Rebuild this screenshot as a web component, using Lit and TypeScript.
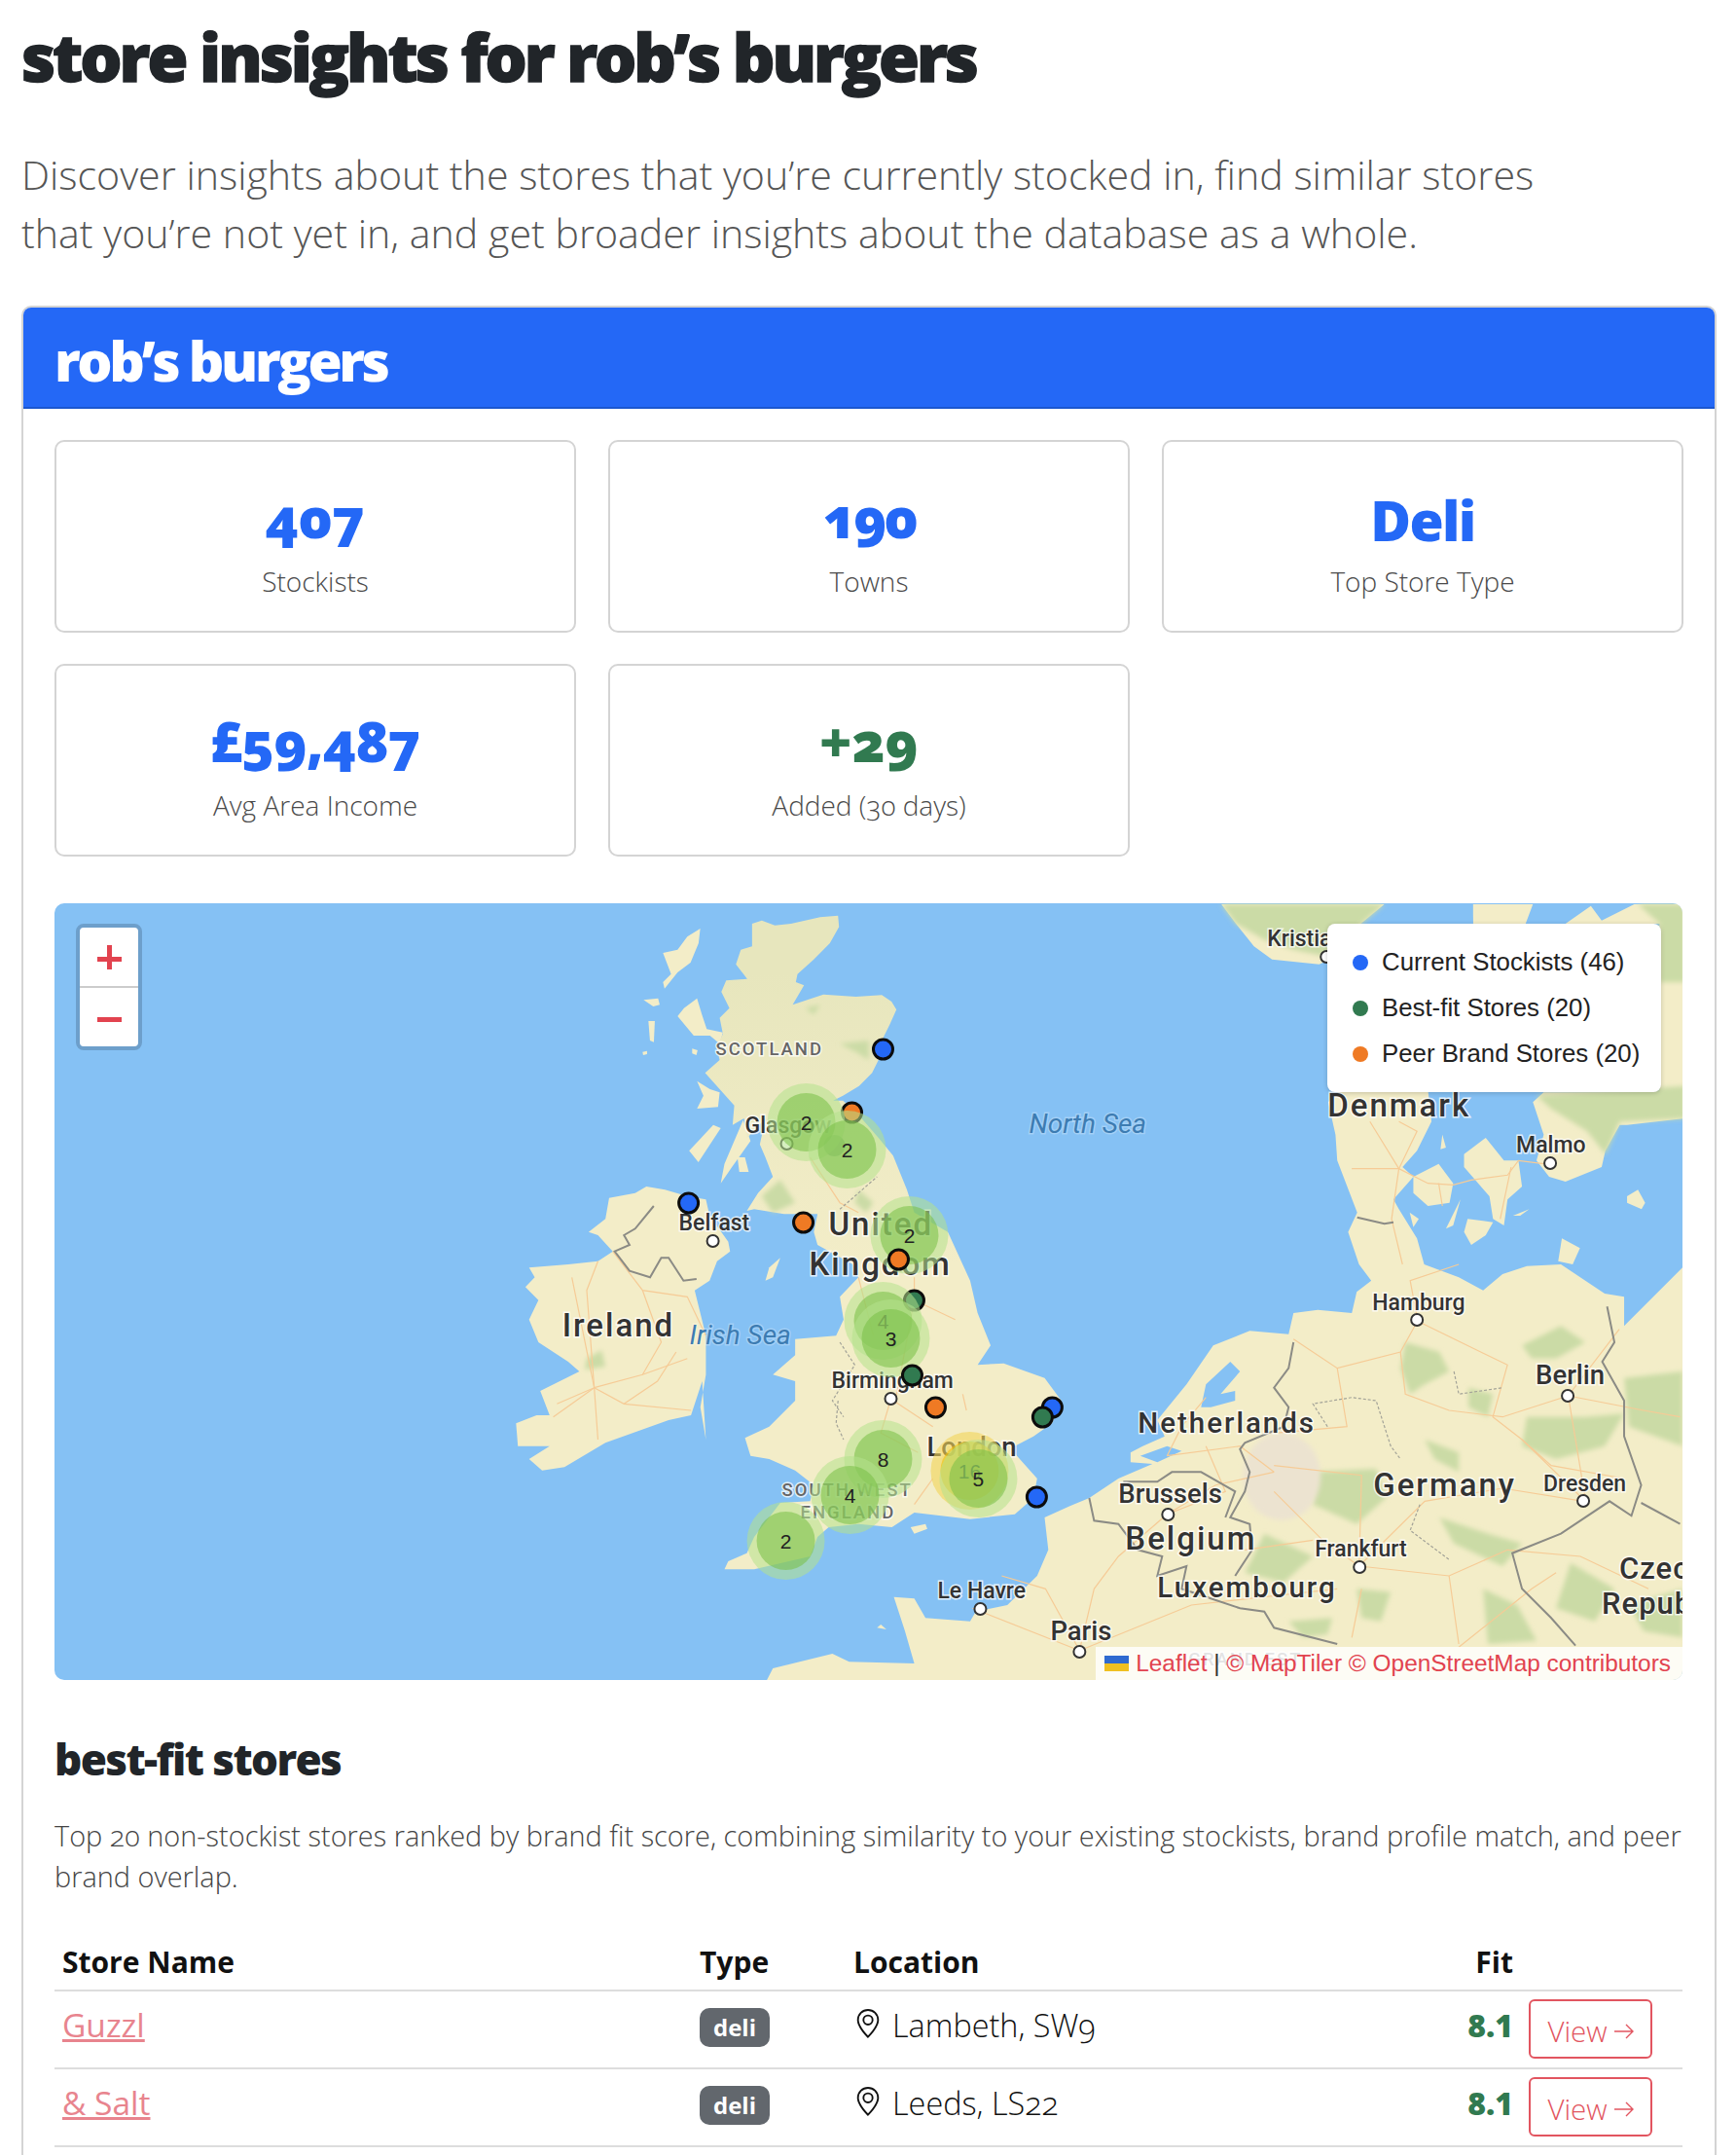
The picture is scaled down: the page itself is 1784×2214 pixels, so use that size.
import { LitElement, html, css, svg } from "lit";
import { customElement } from "lit/decorators.js";

type Zoom = [number, number, number];
const Z4: Zoom = [1200, 900, 2.685];
const Z5: Zoom = [500, 1080, 2.613];
const Z6: Zoom = [500, 1380, 2.613];
const Z7: Zoom = [1000, 1300, 2];
const Z10: Zoom = [640, 930, 3];

const conv = (z: Zoom, s: string) =>
  s.trim().split(/\s+/).map((p) => {
    const [x, y] = p.split(",").map(Number);
    return `${(z[0] + x / z[2]).toFixed(1)},${(z[1] + y / 3).toFixed(1)}`;
  }).join(" ");

const gb = [
  conv(Z10, "400,60 430,50 470,65 520,60 610,40 665,35 668,70 640,120 590,170 540,215 535,240 560,250 525,310 570,295 620,278 720,285 800,280 830,300 845,325 825,370 800,420 790,480 770,520 730,560 680,590 650,605 680,605 720,640 790,720 835,775"),
  conv(Z5, "1130,430 1150,500 1240,560 1300,710 1320,810 1355,910 1320,970 1390,965"),
  conv(Z6, "1500,110 1545,180 1520,250 1470,290 1420,320 1410,330 1480,420 1470,480 1420,530 1300,545 1150,525 1090,570 1000,560 920,570 890,600 870,660 720,700 640,700 650,675 700,650 720,600 790,495 870,490 880,440 830,395 760,360 710,350 695,295 760,260 830,180 830,120 770,100 830,40"),
  conv(Z5, "830,890 940,880 960,830 950,760 1000,700 985,660 890,600 880,560 890,505 800,505 720,490 700,495 730,440 770,390 750,330 735,290 750,210"),
  conv(Z10, "385,720 375,660 340,680 345,620 300,570 255,520 300,480 290,440 310,400 300,350 330,320 305,270 320,235 385,230 350,185 365,140 400,130"),
].join(" ");

const ireland = [
  conv(Z5, "330,455 400,440 430,420 480,430 540,450 590,460 600,510 650,590 655,620 620,650 600,710 560,740 590,880 590,1000 575,1100 590,1200"),
  conv(Z6, "580,120 550,225 490,240 320,310 210,385 150,395 115,360 170,320 85,320 80,250 135,225 170,225 145,150 250,90"),
  conv(Z5, "220,960 140,900 115,830 140,770 105,730 130,700 115,670 220,660 300,650 340,620 300,570 275,560 320,520"),
].join(" ");

const continent = [
  conv(Z6, "750,1050 770,1005 930,960 975,985 1150,990 1125,890 1095,785 1150,790 1180,850 1300,860 1315,830 1400,810 1480,720 1510,640 1500,540 1568,505"),
  conv(Z7, "240,720 300,660 370,615 325,610 325,580 350,560 395,530 380,480 440,370 495,250 570,205 650,215 660,150 710,140 780,150 790,85 820,50"),
  conv(Z4, "530,1200 500,1100 525,1040 470,880 465,800 445,700 480,660 720,660 730,760 690,850 650,900 680,930 625,1000 640,1030 690,1120 710,1200"),
  conv(Z7, "1000,40 1050,80 1090,30 1140,5 1210,0 1300,90 1340,100 1340,190 1460,10 1480,0"),
  "1760,1760 787,1760",
].join(" ");

const landSmall: string[] = [
  conv(Z10, "240,75 235,120 210,180 170,210 130,260 125,240 150,215 125,150 170,140 200,100"),
  conv(Z10, "230,290 245,340 260,385 310,395 300,430 270,405 220,405 170,345 190,320"),
  conv(Z10, "65,295 110,290 115,310 95,315"),
  conv(Z10, "80,360 100,360 97,425 85,420"),
  conv(Z10, "230,545 270,570 300,580 295,625 230,630 250,590"),
  conv(Z10, "215,445 232,450 228,465 215,460"),
  conv(Z10, "62,455 76,452 76,462 64,465"),
  conv(Z5, "790,640 770,700 750,710 760,670"),
  conv(Z5, "630,410 640,350 690,215 710,280 660,360"),
  conv(Z5, "675,330 695,330 705,375 680,375"),
  conv(Z5, "545,310 610,230 630,240 570,345"),
  conv(Z6, "1140,570 1180,560 1185,575 1150,590"),
  conv(Z6, "1050,880 1075,885 1060,870"),
  conv(Z4, "150,90 190,150 240,220 290,260 420,275 450,260 480,200 600,90"),
  conv(Z4, "1010,700 1040,670 1360,670 1360,150 845,150 845,90 1010,90 990,150 1100,150 1170,95 1200,140 1290,90 1430,90 1430,750 1270,770 1250,770 1210,850 1200,900 1100,945 1055,930 1020,880 1040,800"),
  conv(Z4, "680,930 750,890 790,950 780,1010 720,1020 680,980"),
  conv(Z4, "820,860 880,810 930,880 970,880 980,960 940,1000 930,1080 900,1060 890,990 820,900"),
  conv(Z4, "1270,990 1300,970 1320,1010 1310,1030 1270,1010"),
  conv(Z4, "830,1060 900,1070 880,1110 840,1140 820,1100"),
  conv(Z4, "770,1090 810,1000 790,1080"),
  conv(Z4, "670,1040 695,1060 680,1085"),
  conv(Z4, "1090,1120 1140,1150 1120,1200 1080,1190"),
  conv(Z4, "760,800 770,840 755,845"),
  conv(Z4, "955,1050 1000,1030 975,1050"),
];

const seaCuts: string[] = [
  conv(Z7, "470,440 480,370 530,300 550,330 510,400 540,390 540,420 490,440"),
  conv(Z7, "345,590 400,560 430,575 380,610"),
  conv(Z4, "600,90 840,90 845,150 600,150"),
];

const forests: string[] = [
  conv(Z7, "890,240 960,270 980,330 930,370 900,400 880,320"),
  conv(Z7, "1020,380 1070,400 1060,470 1020,440"),
  conv(Z7, "1130,250 1210,190 1260,240 1200,290 1150,290"),
  conv(Z7, "1140,470 1260,470 1340,460 1300,560 1200,600 1130,560"),
  conv(Z7, "1340,350 1460,330 1460,560 1350,500"),
  conv(Z7, "930,540 1000,580 1000,640 950,600"),
  conv(Z7, "700,640 830,630 850,720 790,800 700,740"),
  conv(Z7, "960,780 1060,830 1130,860 1090,930 990,860"),
  conv(Z7, "1230,920 1320,1000 1280,1100 1200,1060"),
  conv(Z7, "600,830 700,900 640,980 560,950"),
  conv(Z7, "790,1000 860,1010 840,1100 800,1090"),
  conv(Z7, "1050,1000 1120,1050 1160,1160 1060,1170"),
  conv(Z7, "1350,1050 1460,1000 1460,1150 1380,1130"),
  conv(Z7, "650,1100 740,1090 730,1140 680,1150"),
  conv(Z4, "150,90 600,90 430,250 350,230 270,200 190,150"),
  conv(Z4, "1020,680 1430,650 1430,750 1250,760 1210,860 1160,790 1060,720"),
  conv(Z4, "1300,90 1430,90 1430,330 1360,330 1360,150"),
  conv(Z5, "740,450 790,400 830,470 770,500"),
  conv(Z5, "1000,430 1040,470 1020,500 990,470"),
  conv(Z10, "670,430 760,420 760,480 720,455"),
  conv(Z10, "565,320 610,310 590,340"),
  conv(Z5, "270,950 310,925 320,975 265,985"),
];

const roads: string[] = [
  conv(Z7, "660,230 750,320 880,270 915,175"),
  conv(Z7, "915,175 1100,310 1070,470 1130,540 1260,730"),
  conv(Z7, "880,270 890,400 980,450 1090,470 1225,405"),
  conv(Z7, "750,320 770,500 620,520"),
  conv(Z7, "620,620 800,650 795,930"),
  conv(Z7, "795,930 720,850 620,700"),
  conv(Z7, "795,930 930,730 1090,690 1256,730"),
  conv(Z7, "795,930 980,960 1100,880 1250,900 1390,1000"),
  conv(Z7, "800,1000 780,1150"),
  conv(Z7, "980,960 1000,1170"),
  conv(Z7, "1225,405 1380,450 1455,470"),
  conv(Z7, "1225,405 1330,200"),
  conv(Z7, "1225,405 1260,720"),
  conv(Z7, "400,770 500,680 620,640"),
  conv(Z7, "400,770 300,900 250,1000 220,1190"),
  conv(Z7, "220,1190 150,1000 60,960"),
  conv(Z7, "220,1190 0,1060"),
  conv(Z7, "220,1190 450,1050 750,1000"),
  conv(Z7, "400,590 550,560 620,640"),
  conv(Z7, "400,590 430,500 480,410"),
  conv(Z7, "1000,0 900,50 915,170"),
  conv(Z7, "1000,1180 1150,1000 1200,950"),
  conv(Z7, "1340,660 1190,620 1130,540"),
  conv(Z7, "480,560 520,700 400,770"),
  conv(Z7, "560,880 700,850"),
  conv(Z4, "510,905 640,905 720,950 790,955 840,940 940,925 970,880 1040,890"),
  conv(Z4, "560,760 640,905 620,1060 650,1200"),
  conv(Z4, "640,760 690,790 640,905"),
  conv(Z4, "750,950 760,1020"),
  conv(Z4, "950,900 920,1060"),
  conv(Z5, "300,650 270,740 290,1040"),
  conv(Z5, "340,620 420,740 540,760 590,880"),
  conv(Z5, "290,1040 420,1000 540,950"),
  conv(Z5, "230,700 290,1040 190,1090"),
  conv(Z5, "420,740 470,900 420,1000"),
  conv(Z6, "290,140 180,230"),
  conv(Z6, "290,140 370,190 550,210"),
  conv(Z6, "370,190 460,120 510,30"),
  conv(Z6, "290,140 300,300"),
  conv(Z6, "1087,175 1060,280 1160,340"),
  conv(Z6, "1087,175 1200,260"),
  conv(Z6, "1150,500 1200,420"),
  conv(Z6, "1280,160 1290,210"),
  conv(Z5, "1150,700 1150,770 1260,830"),
  conv(Z5, "1000,700 1040,880"),
  conv(Z5, "870,330 950,470 1000,500"),
  conv(Z5, "1150,770 1100,1075"),
];

const borders: string[] = [
  conv(Z5, "450,480 400,550 370,570 385,600 345,620 385,680 440,700 470,640 490,640 530,710 565,705"),
  conv(Z7, "1305,130 1320,240 1295,300 1340,420 1340,530 1375,680 1355,775 1310,730 1210,830 1110,890 1130,1000 1190,1090 1240,1175"),
  conv(Z7, "1375,735 1455,800"),
  conv(Z7, "660,240 650,320 620,380 650,440 640,500 560,550 550,570 570,640 560,700 530,780 570,800 575,880 540,960"),
  conv(Z7, "240,720 250,790 300,800 340,880 390,900 380,960 440,930 430,1000 490,1030 550,1060 600,1070 620,1120 750,1170"),
  conv(Z7, "520,780 540,700 470,640 410,640 380,670 310,670"),
  conv(Z4, "525,1055 600,1075 625,1070"),
];

const dashed: string[] = [
  conv(Z5, "950,490 1050,390"),
  conv(Z5, "950,900 990,970 930,1080 960,1130"),
  conv(Z6, "945,180 940,250 960,300"),
  conv(Z7, "730,500 700,430 780,410 830,420 860,560 880,600"),
  conv(Z7, "990,330 1000,400 1090,380"),
  conv(Z7, "920,740 900,820 980,910"),
];

const labels: [string, number, number, string][] = [
  ["Kristiansand", 1303, 973, "city"],
  ["Denmark", 1365, 1148, "country"],
  ["Malmo", 1559, 1185, "city"],
  ["North Sea", 1058, 1165, "sea"],
  ["SCOTLAND", 736, 1085, "region"],
  ["Glasgow", 766, 1165, "city"],
  ["Belfast", 698, 1265, "city"],
  ["United", 852, 1270, "country"],
  ["Kingdom", 832, 1311, "country"],
  ["Ireland", 578, 1374, "country"],
  ["Irish Sea", 709, 1382, "sea"],
  ["Birmingham", 855, 1427, "city"],
  ["London", 953, 1497, "big"],
  ["SOUTH WEST", 804, 1538, "region"],
  ["ENGLAND", 823, 1561, "region"],
  ["Le Havre", 964, 1643, "city"],
  ["Paris", 1080, 1686, "big"],
  ["Netherlands", 1170, 1473, "country small"],
  ["Brussels", 1150, 1545, "big"],
  ["Belgium", 1157, 1593, "country"],
  ["Luxembourg", 1190, 1642, "country small"],
  ["Germany", 1412, 1538, "country"],
  ["Frankfurt", 1352, 1600, "city"],
  ["Dresden", 1587, 1533, "city"],
  ["Hamburg", 1411, 1347, "city"],
  ["Berlin", 1579, 1423, "big"],
  ["Czech", 1665, 1623, "country mid"],
  ["Republic", 1647, 1659, "country mid"],
  ["GRAND EST", 1222, 1712, "region"],
];

const cityPins: [number, number][] = [
  [1364, 984], [1594, 1196], [809, 1176], [733, 1276], [916, 1438], [1008, 1654],
  [1110, 1698], [1201, 1557], [1398, 1611], [1628, 1543], [1457, 1357], [1612, 1435],
];

const BLUE = "#2468f6", GREEN = "#317a50", ORANGE = "#ef7a24";
const under: [number, number, string][] = [
  [908, 1079, BLUE], [708, 1237, BLUE], [876, 1144, ORANGE], [826, 1257, ORANGE],
  [940, 1337, GREEN], [1082, 1447, BLUE], [1066, 1539, BLUE],
];
const over: [number, number, string][] = [
  [924, 1295, ORANGE], [938, 1414, GREEN], [962, 1447, ORANGE], [1072, 1457, GREEN],
];
const clusters: [number, number, string, boolean][] = [
  [829, 1154, "2", false],
  [871, 1182, "2", false],
  [935, 1270, "2", false],
  [908, 1358, "4", false],
  [916, 1376, "3", false],
  [908, 1500, "8", false],
  [874, 1537, "4", false],
  [808, 1584, "2", false],
  [997, 1512, "16", true],
  [1006, 1520, "5", false],
];

const marker = (m: [number, number, string]) =>
  svg`<circle class="marker" cx=${m[0]} cy=${m[1]} r="10" fill=${m[2]}></circle>`;

const pinIcon = html`<svg class="pin" viewBox="0 0 16 16" fill="currentColor">
  <path d="M12.166 8.94c-.524 1.062-1.234 2.12-1.96 3.07A31.493 31.493 0 0 1 8 14.58a31.481 31.481 0 0 1-2.206-2.57c-.726-.95-1.436-2.008-1.96-3.07C3.304 7.867 3 6.862 3 6a5 5 0 0 1 10 0c0 .862-.305 1.867-.834 2.94zM8 16s6-5.686 6-10A6 6 0 0 0 2 6c0 4.314 6 10 6 10z"></path>
  <path d="M8 8a2 2 0 1 1 0-4 2 2 0 0 1 0 4zm0 1a3 3 0 1 0 0-6 3 3 0 0 0 0 6z"></path>
</svg>`;

const arrowIcon = html`<svg class="arrow" viewBox="0 0 20 16" fill="none" stroke="currentColor" stroke-width="1.4">
  <path d="M0 8h19M12 1l7 7-7 7"></path>
</svg>`;

const stats = [
  { v: "407", l: "Stockists", cls: "num" },
  { v: "190", l: "Towns", cls: "num tight" },
  { v: "Deli", l: "Top Store Type", cls: "word" },
  { v: "£59,487", l: "Avg Area Income", cls: "num mid" },
  { v: "+29", l: "Added (30 days)", cls: "num green" },
];

const rows = [
  { n: "Guzzl", loc: "Lambeth, SW9" },
  { n: "& Salt", loc: "Leeds, LS22" },
];

@customElement("app-root")
export class AppRoot extends LitElement {
  static styles = css`
    :host {
      display: block;
      width: 1784px;
      height: 2214px;
      overflow: hidden;
      background: #fff;
      font-family: "Open Sans", sans-serif;
      color: #212529;
      font-variant-numeric: oldstyle-nums;
    }
    .page { padding: 0 20px 0 22px; }
    h1 {
      margin: 0;
      padding-top: 12px;
      font-size: 68px;
      line-height: 92px;
      font-weight: 800;
      letter-spacing: -3.05px;
      color: #212529;
      -webkit-text-stroke: 1.4px #212529;
    }
    .lead {
      margin: 45px 0 0;
      font-size: 41.15px;
      line-height: 60px;
      font-weight: 300;
      color: #555;
    }
    .card {
      margin-top: 45px;
      border: 2px solid #d4d4d4;
      border-radius: 10px;
      padding-bottom: 200px;
    }
    .card-head {
      background: #2468f6;
      border-bottom: 2px solid #1b57cf;
      border-radius: 8px 8px 0 0;
      color: #fff;
      font-size: 57px;
      line-height: 100px;
      height: 104px;
      box-sizing: border-box;
      padding: 4px 0 0 32px;
      font-weight: 800;
      letter-spacing: -3.4px;
    }
    .body { padding: 32px 33px 0 32px; }
    .stats {
      display: grid;
      grid-template-columns: repeat(3, 536px);
      gap: 32px 33px;
    }
    .stat {
      height: 198px;
      box-sizing: border-box;
      border: 2px solid #d4d4d4;
      border-radius: 10px;
      text-align: center;
      padding-top: 47px;
    }
    .val {
      font-size: 57px;
      line-height: 64px;
      font-weight: 800;
      color: #2468f6;
    }
    .val.num { letter-spacing: -0.2px; margin-top: -2px; padding-bottom: 2px; }
    .val.tight { letter-spacing: -3px; }
    .val.mid { letter-spacing: -1px; }
    .val.word { letter-spacing: -1.6px; padding-top: 1px; margin-bottom: -1px; }
    .val.green { color: #317a50; }
    .lab {
      margin-top: 14px;
      font-size: 28px;
      line-height: 36px;
      font-weight: 300;
      color: #4a4a4a;
    }
    .map {
      position: relative;
      margin-top: 48px;
      height: 798px;
      border-radius: 10px;
      overflow: hidden;
      background: #85c1f4;
    }
    .map svg.base { display: block; width: 100%; height: 100%; }
    .land { fill: #f3edc8; }
    .gbland { fill: url(#gbg); }
    .forest { fill: #cbdba6; filter: url(#soft); }
    .sea { fill: #85c1f4; }
    .road { fill: none; stroke: #f6cb96; stroke-width: 1.2; }
    .border { fill: none; stroke: #8b8b85; stroke-width: 2; }
    .dash { fill: none; stroke: #a3a398; stroke-width: 1.2; stroke-dasharray: 3 2; }
    .ruhr { fill: #ece3d0; filter: url(#soft); }
    .lbl {
      font-family: Roboto, sans-serif;
      paint-order: stroke;
      stroke: rgba(255, 255, 255, 0.75);
      stroke-width: 3px;
      fill: #333;
    }
    .lbl.city { font-size: 23px; font-weight: 500; }
    .lbl.big { font-size: 27.5px; font-weight: 500; }
    .lbl.country { font-size: 33px; font-weight: 500; letter-spacing: 2px; }
    .lbl.country.small { font-size: 29.5px; }
    .lbl.country.mid { font-size: 31px; letter-spacing: 1px; }
    .lbl.region { font-size: 18.5px; font-weight: 500; letter-spacing: 2px; fill: #666; }
    .lbl.sea { font-size: 28px; font-style: italic; fill: #3d7cb2; stroke: rgba(255, 255, 255, 0.25); }
    .citypin { fill: #fff; stroke: #333; stroke-width: 2; }
    .marker { stroke: #0c0c0c; stroke-width: 3; }
    .c-outer { fill: rgba(181, 226, 140, 0.55); }
    .c-inner { fill: rgba(120, 192, 70, 0.55); }
    .y-outer { fill: rgba(241, 211, 87, 0.6); }
    .y-inner { fill: rgba(240, 194, 12, 0.6); }
    .c-text { font-family: "Liberation Sans", sans-serif; font-size: 21px; fill: #222; text-anchor: middle; }
    .zoom {
      position: absolute;
      left: 22px;
      top: 21px;
      width: 60px;
      border: 4px solid #6d9fcb;
      border-radius: 8px;
      background: #fff;
    }
    .zoom div { height: 60px; position: relative; }
    .zoom div + div { border-top: 2px solid #ccc; }
    .zoom i { position: absolute; left: 18px; top: 30px; width: 25px; height: 5px; background: #e2434f; }
    .zoom i.v { left: 28px; top: 18px; width: 5px; height: 25px; }
    .legend {
      position: absolute;
      right: 22px;
      top: 21px;
      width: 343px;
      height: 173px;
      box-sizing: border-box;
      background: #fff;
      border-radius: 8px;
      padding: 16px 0 0 26px;
      font-family: "Liberation Sans", sans-serif;
      font-size: 25.8px;
      color: #222;
      box-shadow: 0 1px 5px rgba(0, 0, 0, 0.2);
    }
    .legend div { display: flex; align-items: center; height: 47px; gap: 14px; }
    .legend b { width: 16px; height: 16px; border-radius: 50%; flex: none; }
    .attrib {
      position: absolute;
      right: 0;
      bottom: 0;
      height: 34px;
      box-sizing: border-box;
      padding: 0 12px 0 9px;
      background: rgba(255, 255, 255, 0.82);
      font-family: "Liberation Sans", sans-serif;
      font-size: 24.4px;
      color: #333;
      display: flex;
      align-items: center;
    }
    .attrib p { margin: 0; white-space: pre; line-height: 34px; }
    .attrib span { color: #e2434f; }
    .flag { width: 25px; height: 16px; margin-right: 7px; display: flex; flex-direction: column; }
    .flag u { flex: 1; }
    .flag u:first-child { background: #2f6ad0; }
    .flag u:last-child { background: #f0c020; }
    h2 {
      margin: 51px 0 0;
      font-size: 44px;
      line-height: 60px;
      font-weight: 800;
      letter-spacing: -1.6px;
      color: #212529;
    }
    .sub {
      margin: 28px 0 0;
      font-size: 28.9px;
      line-height: 42px;
      font-weight: 300;
      color: #444;
      white-space: nowrap;
    }
    .thead, .row {
      display: grid;
      grid-template-columns: 655px 158px 1fr 55px 143px;
      padding: 0 31px 0 8px;
      align-items: center;
      border-bottom: 2px solid #ddd;
    }
    .thead {
      margin-top: 37px;
      height: 58px;
      font-size: 30px;
      font-weight: 700;
      color: #111;
    }
    .row { height: 80px; box-sizing: border-box; padding-bottom: 4px; }
    .thead .fit, .row .fit { text-align: right; }
    .name, .loc, .score { padding-bottom: 6px; }
    .row a {
      color: #e8848e;
      font-size: 33.5px;
      font-weight: 400;
      text-decoration: underline;
      text-decoration-thickness: 2.5px;
    }
    .badge {
      display: inline-block;
      width: 72px;
      height: 40px;
      line-height: 40px;
      text-align: center;
      border-radius: 10px;
      background: #62676d;
      color: #fff;
      font-size: 24px;
      font-weight: 700;
    }
    .loc { display: flex; align-items: center; gap: 10px; font-size: 32.4px; font-weight: 300; color: #111; }
    .pin { width: 30px; height: 30px; flex: none; margin-top: -2px; }
    .score { font-size: 32px; font-weight: 800; color: #317a50; font-variant-numeric: lining-nums; }
    .view {
      justify-self: end;
      width: 127px;
      height: 61px;
      margin-top: 3px;
      box-sizing: border-box;
      border: 2px solid #e25560;
      border-radius: 6px;
      color: #e25560;
      display: flex;
      align-items: center;
      justify-content: center;
      gap: 7px;
      padding-top: 4px;
      font-size: 29.5px;
      font-weight: 300;
    }
    .arrow { width: 20px; height: 16px; }
  `;

  render() {
    return html`<div class="page">
      <h1>store insights for rob’s burgers</h1>
      <p class="lead">Discover insights about the stores that you’re currently stocked in, find similar stores<br />that you’re not yet in, and get broader insights about the database as a whole.</p>
      <div class="card">
        <div class="card-head">rob’s burgers</div>
        <div class="body">
          <div class="stats">
            ${stats.map((s) => html`<div class="stat">
              <div class="val ${s.cls}">${s.v}</div>
              <div class="lab">${s.l}</div>
            </div>`)}
          </div>
          <div class="map">
            ${this.renderMap()}
            <div class="zoom">
              <div><i></i><i class="v"></i></div>
              <div><i></i></div>
            </div>
            <div class="legend">
              <div><b style="background:${BLUE}"></b>Current Stockists (46)</div>
              <div><b style="background:${GREEN}"></b>Best-fit Stores (20)</div>
              <div><b style="background:${ORANGE}"></b>Peer Brand Stores (20)</div>
            </div>
            <div class="attrib"><i class="flag"><u></u><u></u></i><p><span>Leaflet</span> | <span>© MapTiler</span> <span>© OpenStreetMap contributors</span></p></div>
          </div>
          <h2>best-fit stores</h2>
          <p class="sub">Top 20 non-stockist stores ranked by brand fit score, combining similarity to your existing stockists, brand profile match, and peer<br />brand overlap.</p>
          <div class="thead">
            <div>Store Name</div><div>Type</div><div>Location</div><div class="fit">Fit</div><div></div>
          </div>
          ${rows.map((r) => html`<div class="row">
            <div class="name"><a href="#">${r.n}</a></div>
            <div><span class="badge">deli</span></div>
            <div class="loc">${pinIcon}<span>${r.loc}</span></div>
            <div class="fit score">8.1</div>
            <div class="view"><span>View</span>${arrowIcon}</div>
          </div>`)}
        </div>
      </div>
    </div>`;
  }

  renderMap() {
    return html`<svg class="base" viewBox="56 929 1674 798" preserveAspectRatio="none">
      <defs>
        <linearGradient id="gbg" gradientUnits="userSpaceOnUse" x1="0" y1="1000" x2="0" y2="1300">
          <stop offset="0" stop-color="#e7e6bd"></stop>
          <stop offset="1" stop-color="#f3edc8"></stop>
        </linearGradient>
        <filter id="soft" x="-20%" y="-20%" width="140%" height="140%">
          <feGaussianBlur stdDeviation="2.5"></feGaussianBlur>
        </filter>
      </defs>
      <polygon class="land" points=${continent}></polygon>
      ${landSmall.map((p) => svg`<polygon class="land" points=${p}></polygon>`)}
      <polygon class="land" points=${ireland}></polygon>
      <polygon class="gbland" points=${gb}></polygon>
      ${seaCuts.map((p) => svg`<polygon class="sea" points=${p}></polygon>`)}
      ${forests.map((p) => svg`<polygon class="forest" points=${p}></polygon>`)}
      <ellipse class="ruhr" cx="1318" cy="1518" rx="40" ry="45"></ellipse>
      ${roads.map((p) => svg`<polyline class="road" points=${p}></polyline>`)}
      ${dashed.map((p) => svg`<polyline class="dash" points=${p}></polyline>`)}
      ${borders.map((p) => svg`<polyline class="border" points=${p}></polyline>`)}
      ${cityPins.map((p) => svg`<circle class="citypin" cx=${p[0]} cy=${p[1]} r="6"></circle>`)}
      ${labels.map((l) => svg`<text class="lbl ${l[3]}" x=${l[1]} y=${l[2]}>${l[0]}</text>`)}
      ${under.map(marker)}
      <circle cx="858" cy="1178" r="11" fill="rgba(60,130,70,.45)"></circle>
      ${clusters.map((c) => svg`
        <circle class=${c[3] ? "y-outer" : "c-outer"} cx=${c[0]} cy=${c[1]} r="40"></circle>
        <circle class=${c[3] ? "y-inner" : "c-inner"} cx=${c[0]} cy=${c[1]} r="30"></circle>
        <text class="c-text" x=${c[0]} y=${c[1] + 8}>${c[2]}</text>`)}
      ${over.map(marker)}
    </svg>`;
  }
}
